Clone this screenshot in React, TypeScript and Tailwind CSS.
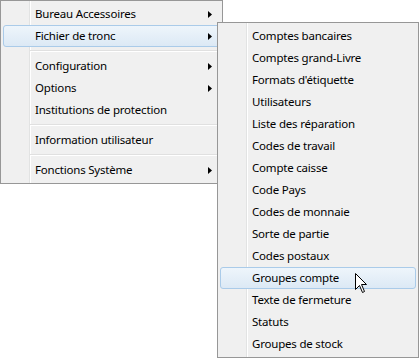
type Entry = { label: string; arrow?: boolean; active?: boolean } | "sep";

const mainMenu: Entry[] = [
  { label: "Bureau Accessoires", arrow: true },
  { label: "Fichier de tronc", arrow: true, active: true },
  "sep",
  { label: "Configuration", arrow: true },
  { label: "Options", arrow: true },
  { label: "Institutions de protection" },
  "sep",
  { label: "Information utilisateur" },
  "sep",
  { label: "Fonctions Système", arrow: true },
];

const subMenu: Entry[] = [
  { label: "Comptes bancaires" },
  { label: "Comptes grand-Livre" },
  { label: "Formats d'étiquette" },
  { label: "Utilisateurs" },
  { label: "Liste des réparation" },
  { label: "Codes de travail" },
  { label: "Compte caisse" },
  { label: "Code Pays" },
  { label: "Codes de monnaie" },
  { label: "Sorte de partie" },
  { label: "Codes postaux" },
  { label: "Groupes compte", active: true },
  { label: "Texte de fermeture" },
  { label: "Statuts" },
  { label: "Groupes de stock" },
];

const Arrow = () => (
  <svg width="4" height="7" viewBox="0 0 4 7" className="shrink-0">
    <polygon points="0,0 4,3.5 0,7" fill="#000" />
  </svg>
);

const Cursor = () => (
  <svg width="13" height="21" viewBox="0 0 13 21" className="absolute left-[355px] top-[273px]">
    <path
      d="M0.5 0.5 L0.5 16.5 L4.5 12.5 L7.5 19.5 L9.5 18.5 L6.5 11.5 L11.5 11.5 Z"
      fill="#fff"
      stroke="#000"
      strokeWidth="1"
      strokeLinejoin="miter"
    />
  </svg>
);

function Menu({ items, className }: { items: Entry[]; className: string }) {
  return (
    <div
      className={`absolute border border-[#979797] p-[2px] bg-[linear-gradient(to_right,#f0f0f0_28px,#e2e3e3_28px,#e2e3e3_29px,#ffffff_29px,#ffffff_30px,#f0f0f0_30px)] ${className}`}
    >
      {items.map((it, i) =>
        it === "sep" ? (
          <div key={i} className="h-[8px] flex flex-col justify-center pl-[27px]">
            <div className="h-px bg-[#e0e0e0]" />
            <div className="h-px bg-white" />
          </div>
        ) : (
          <div
            key={i}
            className={`h-[22px] flex items-center justify-between pl-[31px] pr-[7px] rounded-[3px] border ${
              it.active
                ? "border-[#aacbe9] bg-[linear-gradient(to_bottom,#eef5fb,#dce9f5)]"
                : "border-transparent"
            }`}
          >
            <span>{it.label}</span>
            {it.arrow && <Arrow />}
          </div>
        )
      )}
    </div>
  );
}

export default function App() {
  return (
    <div
      className="relative w-[419px] h-[358px] bg-white text-[11.5px] tracking-[-0.2px] text-black leading-none overflow-hidden"
      style={{ fontFamily: '"Noto Sans", "Open Sans", sans-serif' }}
    >
      <Menu items={mainMenu} className="left-0 top-0 w-[223px] h-[184px]" />
      <Menu items={subMenu} className="left-[217px] top-[22px] w-[202px] h-[336px]" />
      <Cursor />
    </div>
  );
}
